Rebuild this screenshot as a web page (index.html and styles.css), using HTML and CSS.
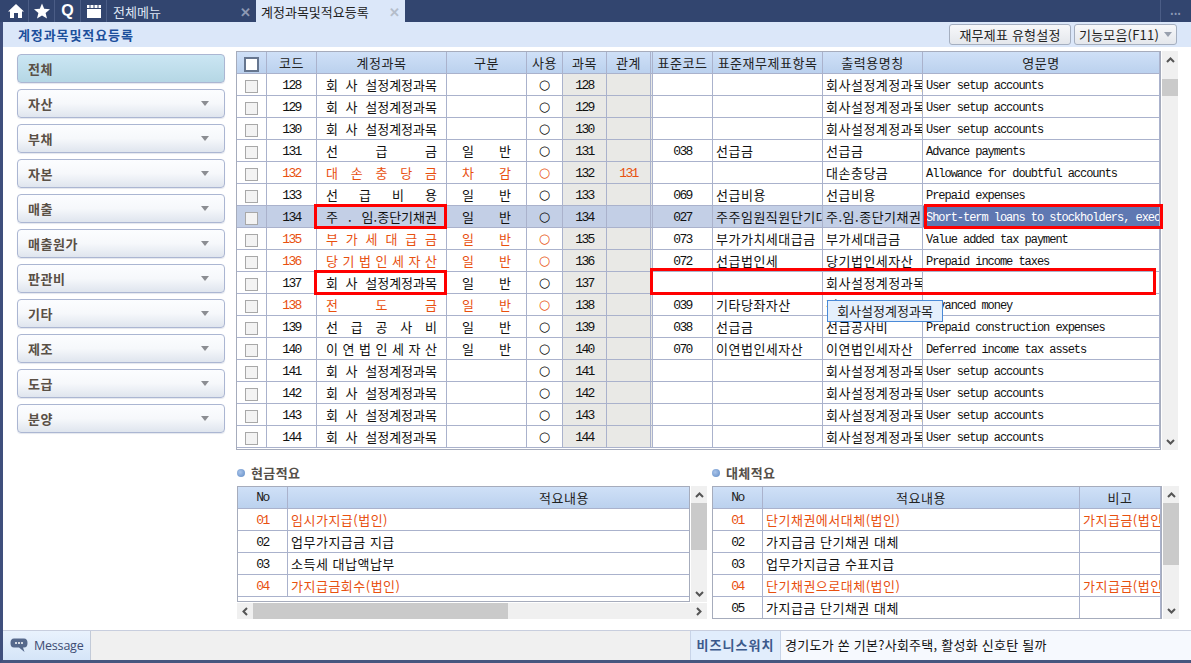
FILE: index.html
```html
<!DOCTYPE html>
<html lang="ko">
<head>
    <meta charset="UTF-8">
    <title>계정과목및적요등록</title>
    <link rel="stylesheet" href="styles.css">
</head>
<body>
<div class="window">
    <div class="tabbar">
        <div class="tab-icon"><svg width="18" height="16" viewBox="0 0 18 16"><path d="M9 1 L17 8.5 L15 8.5 L15 15 L11 15 L11 10 L7 10 L7 15 L3 15 L3 8.5 L1 8.5 Z" fill="#fff"/></svg></div>
        <div class="tab-icon"><svg width="18" height="16" viewBox="0 0 18 16"><path d="M9 0.5 L11.2 5.8 L17 6.2 L12.6 9.9 L14 15.5 L9 12.5 L4 15.5 L5.4 9.9 L1 6.2 L6.8 5.8 Z" fill="#fff"/></svg></div>
        <div class="tab-icon tab-q">Q</div>
        <div class="tab-icon"><svg width="16" height="15" viewBox="0 0 16 15"><path d="M1 1 H15 V4 H1 Z M1 5 H15 V14 H1 Z" fill="#fff"/><path d="M4 1 V4 M8 1 V4 M12 1 V4" stroke="#32456f" stroke-width="1"/></svg></div>
        <div class="tab">전체메뉴<span class="tab-x">✕</span></div>
        <div class="tab tab-active">계정과목및적요등록<span class="tab-x">✕</span></div>
        <div class="tab-more">•••</div>
    </div>

    <div class="titlebar">
        <h1 class="page-title">계정과목및적요등록</h1>
        <button class="tool-btn btn-type">재무제표 유형설정</button>
        <button class="tool-btn btn-func">기능모음(F11)<span class="arrow"></span></button>
    </div>

    <div class="main">
        <div class="sidebar">
            <div class="side-btn side-active">전체</div>
            <div class="side-btn">자산<span class="side-arrow"></span></div>
            <div class="side-btn">부채<span class="side-arrow"></span></div>
            <div class="side-btn">자본<span class="side-arrow"></span></div>
            <div class="side-btn">매출<span class="side-arrow"></span></div>
            <div class="side-btn">매출원가<span class="side-arrow"></span></div>
            <div class="side-btn">판관비<span class="side-arrow"></span></div>
            <div class="side-btn">기타<span class="side-arrow"></span></div>
            <div class="side-btn">제조<span class="side-arrow"></span></div>
            <div class="side-btn">도급<span class="side-arrow"></span></div>
            <div class="side-btn">분양<span class="side-arrow"></span></div>
        </div>

        <div class="content">
            <div class="grid-area">
                <div class="grid-box">
                    <table class="grid main-grid">
                        <colgroup>
                            <col style="width:30px"><col style="width:50px"><col style="width:130px"><col style="width:80px"><col style="width:36px"><col style="width:44px"><col style="width:46px"><col style="width:60px"><col style="width:110px"><col style="width:100px"><col style="width:237px">
                        </colgroup>
                        <thead>
                            <tr><th><span class="check check-all"></span></th><th>코드</th><th>계정과목</th><th>구분</th><th>사용</th><th>과목</th><th>관계</th><th>표준코드</th><th>표준재무제표항목</th><th>출력용명칭</th><th>영문명</th></tr>
                        </thead>
                        <tbody>
                            <tr><td><span class="check"></span></td><td>128</td><td>회 사 설정계정과목</td><td></td><td>○</td><td>128</td><td></td><td></td><td></td><td>회사설정계정과목</td><td>User setup accounts</td></tr>
                            <tr><td><span class="check"></span></td><td>129</td><td>회 사 설정계정과목</td><td></td><td>○</td><td>129</td><td></td><td></td><td></td><td>회사설정계정과목</td><td>User setup accounts</td></tr>
                            <tr><td><span class="check"></span></td><td>130</td><td>회 사 설정계정과목</td><td></td><td>○</td><td>130</td><td></td><td></td><td></td><td>회사설정계정과목</td><td>User setup accounts</td></tr>
                            <tr><td><span class="check"></span></td><td>131</td><td>선 급 금</td><td>일 반</td><td>○</td><td>131</td><td></td><td>038</td><td>선급금</td><td>선급금</td><td>Advance payments</td></tr>
                            <tr class="red"><td><span class="check"></span></td><td>132</td><td>대 손 충 당 금</td><td>차 감</td><td>○</td><td>132</td><td>131</td><td></td><td></td><td>대손충당금</td><td>Allowance for doubtful accounts</td></tr>
                            <tr><td><span class="check"></span></td><td>133</td><td>선 급 비 용</td><td>일 반</td><td>○</td><td>133</td><td></td><td>069</td><td>선급비용</td><td>선급비용</td><td>Prepaid expenses</td></tr>
                            <tr class="selected"><td><span class="check"></span></td><td>134</td><td>주 . 임.종단기채권</td><td>일 반</td><td>○</td><td>134</td><td></td><td>027</td><td>주주임원직원단기대여금</td><td>주.임.종단기채권</td><td class="cell-on">Short-term loans to stockholders, executives</td></tr>
                            <tr class="red"><td><span class="check"></span></td><td>135</td><td>부 가 세 대 급 금</td><td>일 반</td><td>○</td><td>135</td><td></td><td>073</td><td>부가가치세대급금</td><td>부가세대급금</td><td>Value added tax payment</td></tr>
                            <tr class="red"><td><span class="check"></span></td><td>136</td><td>당 기 법 인 세 자 산</td><td>일 반</td><td>○</td><td>136</td><td></td><td>072</td><td>선급법인세</td><td>당기법인세자산</td><td>Prepaid income taxes</td></tr>
                            <tr><td><span class="check"></span></td><td>137</td><td>회 사 설정계정과목</td><td>일 반</td><td>○</td><td>137</td><td></td><td></td><td></td><td>회사설정계정과목</td><td></td></tr>
                            <tr class="red"><td><span class="check"></span></td><td>138</td><td>전 도 금</td><td>일 반</td><td>○</td><td>138</td><td></td><td>039</td><td>기타당좌자산</td><td>전도금</td><td>Advanced money</td></tr>
                            <tr><td><span class="check"></span></td><td>139</td><td>선 급 공 사 비</td><td>일 반</td><td>○</td><td>139</td><td></td><td>038</td><td>선급금</td><td>선급공사비</td><td>Prepaid construction expenses</td></tr>
                            <tr><td><span class="check"></span></td><td>140</td><td>이 연 법 인 세 자 산</td><td>일 반</td><td>○</td><td>140</td><td></td><td>070</td><td>이연법인세자산</td><td>이연법인세자산</td><td>Deferred income tax assets</td></tr>
                            <tr><td><span class="check"></span></td><td>141</td><td>회 사 설정계정과목</td><td></td><td>○</td><td>141</td><td></td><td></td><td></td><td>회사설정계정과목</td><td>User setup accounts</td></tr>
                            <tr><td><span class="check"></span></td><td>142</td><td>회 사 설정계정과목</td><td></td><td>○</td><td>142</td><td></td><td></td><td></td><td>회사설정계정과목</td><td>User setup accounts</td></tr>
                            <tr><td><span class="check"></span></td><td>143</td><td>회 사 설정계정과목</td><td></td><td>○</td><td>143</td><td></td><td></td><td></td><td>회사설정계정과목</td><td>User setup accounts</td></tr>
                            <tr><td><span class="check"></span></td><td>144</td><td>회 사 설정계정과목</td><td></td><td>○</td><td>144</td><td></td><td></td><td></td><td>회사설정계정과목</td><td>User setup accounts</td></tr>
                        </tbody>
                    </table>
                </div>
                <div class="vscroll vscroll-main">
                    <div class="sb-btn"><svg width="9" height="6" viewBox="0 0 9 6"><path d="M1 5 L4.5 1.5 L8 5" fill="none" stroke="#555" stroke-width="2"/></svg></div>
                    <div class="sb-track"><div class="sb-thumb thumb-main"></div></div>
                    <div class="sb-btn"><svg width="9" height="6" viewBox="0 0 9 6"><path d="M1 1 L4.5 4.5 L8 1" fill="none" stroke="#555" stroke-width="2"/></svg></div>
                </div>

                <div class="mark mark-name1"></div>
                <div class="mark mark-name2"></div>
                <div class="mark mark-eng"></div>
                <div class="mark mark-row"></div>
                <div class="tooltip">회사설정계정과목</div>
            </div>

            <div class="lower">
                <div class="panel panel-left">
                    <h2 class="panel-title"><span class="bullet"></span>현금적요</h2>
                    <div class="panel-body">
                        <div class="grid-box cash-box">
                            <table class="grid sub-grid cash-grid">
                                <colgroup><col style="width:50px"><col style="width:553px"></colgroup>
                                <thead><tr><th>No</th><th>적요내용</th></tr></thead>
                                <tbody>
                                    <tr class="red"><td>01</td><td>임시가지급(법인)</td></tr>
                                    <tr><td>02</td><td>업무가지급금 지급</td></tr>
                                    <tr><td>03</td><td>소득세 대납액납부</td></tr>
                                    <tr class="red"><td>04</td><td>가지급금회수(법인)</td></tr>
                                </tbody>
                            </table>
                        </div>
                        <div class="vscroll">
                            <div class="sb-btn"><svg width="9" height="6" viewBox="0 0 9 6"><path d="M1 5 L4.5 1.5 L8 5" fill="none" stroke="#555" stroke-width="2"/></svg></div>
                            <div class="sb-track"><div class="sb-thumb thumb-cash"></div></div>
                            <div class="sb-btn"><svg width="9" height="6" viewBox="0 0 9 6"><path d="M1 1 L4.5 4.5 L8 1" fill="none" stroke="#555" stroke-width="2"/></svg></div>
                        </div>
                    </div>
                    <div class="hscroll">
                        <div class="sb-btn"><svg width="6" height="9" viewBox="0 0 6 9"><path d="M5 1 L1.5 4.5 L5 8" fill="none" stroke="#555" stroke-width="2"/></svg></div>
                        <div class="sb-track"><div class="sb-thumb thumb-h"></div></div>
                        <div class="sb-btn"><svg width="6" height="9" viewBox="0 0 6 9"><path d="M1 1 L4.5 4.5 L1 8" fill="none" stroke="#555" stroke-width="2"/></svg></div>
                    </div>
                </div>

                <div class="panel panel-right">
                    <h2 class="panel-title"><span class="bullet"></span>대체적요</h2>
                    <div class="panel-body">
                        <div class="grid-box transfer-box">
                            <table class="grid sub-grid transfer-grid">
                                <colgroup><col style="width:50px"><col style="width:317px"><col style="width:81px"></colgroup>
                                <thead><tr><th>No</th><th>적요내용</th><th>비고</th></tr></thead>
                                <tbody>
                                    <tr class="red"><td>01</td><td>단기채권에서대체(법인)</td><td>가지급금(법인)</td></tr>
                                    <tr><td>02</td><td>가지급금 단기채권 대체</td><td></td></tr>
                                    <tr><td>03</td><td>업무가지급금 수표지급</td><td></td></tr>
                                    <tr class="red"><td>04</td><td>단기채권으로대체(법인)</td><td>가지급금(법인)</td></tr>
                                    <tr><td>05</td><td>가지급금 단기채권 대체</td><td></td></tr>
                                </tbody>
                            </table>
                        </div>
                        <div class="vscroll">
                            <div class="sb-btn"><svg width="9" height="6" viewBox="0 0 9 6"><path d="M1 5 L4.5 1.5 L8 5" fill="none" stroke="#555" stroke-width="2"/></svg></div>
                            <div class="sb-track"><div class="sb-thumb thumb-transfer"></div></div>
                            <div class="sb-btn"><svg width="9" height="6" viewBox="0 0 9 6"><path d="M1 1 L4.5 4.5 L8 1" fill="none" stroke="#555" stroke-width="2"/></svg></div>
                        </div>
                    </div>
                </div>
            </div>
        </div>
    </div>

    <div class="statusbar">
        <div class="msg-btn">
            <svg width="18" height="15" viewBox="0 0 18 15"><path d="M4 0.5 H14 Q17.5 0.5 17.5 5 Q17.5 9.5 14 9.5 H13 L14.5 14 L9 9.5 H4 Q0.5 9.5 0.5 5 Q0.5 0.5 4 0.5 Z" fill="#56698c"/><circle cx="6" cy="5" r="1" fill="#fff"/><circle cx="9" cy="5" r="1" fill="#fff"/><circle cx="12" cy="5" r="1" fill="#fff"/></svg>
            Message
        </div>
        <div class="status-space"></div>
        <div class="news-label">비즈니스워치</div>
        <div class="news-text">경기도가 쏜 기본?사회주택, 활성화 신호탄 될까</div>
    </div>
</div>
</body>
</html>
```

FILE: styles.css
```css
* {
    box-sizing: border-box;
}
html, body {
    margin: 0;
    padding: 0;
}
body {
    width: 1191px;
    height: 663px;
    overflow: hidden;
    font-family: "Noto Sans CJK KR", "Noto Sans", sans-serif;
    font-size: 13px;
    color: #111;
    background: #fff;
}
.window {
    display: flex;
    flex-direction: column;
    height: 663px;
    border-left: 3px solid #3f4f7c;
    border-bottom: 3px solid #46567f;
}

/* top tabs */
.tabbar {
    display: flex;
    height: 22px;
    margin-left: -3px;
    background: #32456f;
    color: #dfe6f3;
    flex-shrink: 0;
}
.tab-icon {
    display: flex;
    align-items: center;
    justify-content: center;
    width: 26px;
    border-right: 1px solid #4b5d86;
}
.tab-icon:first-child {
    width: 29px;
    padding-left: 3px;
}
.tab-q {
    color: #fff;
    font-family: "Liberation Sans", sans-serif;
    font-weight: bold;
    font-size: 16px;
}
.tab {
    display: flex;
    align-items: center;
    justify-content: space-between;
    width: 149px;
    padding: 0 5px 0 6px;
    font-size: 13px;
}
.tab-active {
    padding-left: 5px;
    padding-right: 3px;
    background: #dbe7f9;
    color: #222;
}
.tab-x {
    font-size: 13px;
    color: #8d99b4;
    font-weight: bold;
}
.tab-active .tab-x {
    color: #b4bdca;
    margin-right: 2px;
}
.tab-more {
    margin-left: auto;
    width: 31px;
    border-left: 1px solid #4b5d86;
    color: #8d9ab6;
    font-size: 8px;
    line-height: 26px;
    text-align: center;
    letter-spacing: 1px;
}

.titlebar {
    display: flex;
    align-items: center;
    height: 25px;
    padding: 0 14px 1px 15px;
    background: #dbe7f9;
    flex-shrink: 0;
}
.page-title {
    margin: 0 auto 0 0;
    font-size: 13px;
    font-weight: bold;
    color: #1c4f9c;
    letter-spacing: .9px;
}
.tool-btn {
    display: flex;
    align-items: center;
    height: 21px;
    padding: 0;
    justify-content: center;
    border: 1px solid #a5afc0;
    border-radius: 3px;
    background: linear-gradient(#f7f8fa, #e4e7ec);
    font-family: inherit;
    font-size: 13px;
    letter-spacing: .2px;
    color: #222;
}
.btn-type {
    width: 122px;
    margin-right: 3px;
}
.btn-func {
    width: 103px;
}
.arrow {
    margin-left: 5px;
    border-left: 4px solid transparent;
    border-right: 4px solid transparent;
    border-top: 5px solid #98a0ae;
}

.main {
    display: flex;
    flex: 1;
    min-height: 0;
}

/* left filter buttons */
.sidebar {
    display: flex;
    flex-direction: column;
    gap: 6px;
    width: 233px;
    padding: 7px 11px 0 14px;
    flex-shrink: 0;
}
.side-btn {
    display: flex;
    align-items: center;
    justify-content: space-between;
    height: 29px;
    padding: 0 15px 0 10px;
    border: 1px solid #abb6d2;
    border-radius: 4px;
    background: linear-gradient(#fcfdff 0%, #f6f8fb 50%, #dfe5ee 100%);
    box-shadow: 0 1px 1px #e4e7ee;
    font-weight: bold;
    color: #5a5046;
    letter-spacing: .5px;
}
.side-active {
    background: linear-gradient(#cbe6f3, #b5d7e5);
}
.side-arrow {
    border-left: 4px solid transparent;
    border-right: 4px solid transparent;
    border-top: 5px solid #8b8d92;
}

.content {
    flex: 1;
    padding-top: 4px;
}

/* tables */
.grid-area {
    position: relative;
    display: flex;
    height: 399px;
}
.grid-box {
    border: 1px solid #a6acbc;
    overflow: hidden;
    background: #fff;
}
.grid-area .grid-box {
    width: 925px;
}
.grid {
    border-collapse: separate;
    border-spacing: 0;
    table-layout: fixed;
}
.main-grid {
    width: 923px;
}
.grid th {
    height: 22px;
    padding: 0;
    font-weight: normal;
    text-align: center;
    letter-spacing: .5px;
    color: #222;
    background: linear-gradient(#cfe0f7, #bbd1ee);
    border-right: 1px solid #aab2cc;
    border-bottom: 1px solid #aab2cc;
    white-space: nowrap;
    overflow: hidden;
}
.grid td {
    height: 22px;
    padding: 0 3px;
    border-right: 1px solid #aab2cc;
    border-bottom: 1px solid #aab2cc;
    white-space: nowrap;
    overflow: hidden;
    letter-spacing: .5px;
    line-height: 21px;
}
.main-grid td:nth-child(1) {
    text-align: center;
    padding: 0;
}
.main-grid td:nth-child(5) {
    text-align: center;
    padding: 0;
    font-family: "DejaVu Sans", sans-serif;
    font-size: 13px;
    letter-spacing: 0;
    color: #000;
}
.main-grid td:nth-child(2), .main-grid td:nth-child(6), .main-grid td:nth-child(7), .main-grid td:nth-child(8),
.sub-grid td:first-child {
    padding-top: 2px;
    line-height: 19px;
    text-align: center;
    font-family: "Liberation Mono", monospace;
    font-size: 13px;
    letter-spacing: -1.6px;
}
.sub-grid th:first-child {
    font-family: "Liberation Mono", monospace;
    letter-spacing: -1.6px;
}
.main-grid td:nth-child(3), .main-grid td:nth-child(4) {
    white-space: normal;
    text-align: justify;
    text-align-last: justify;
    letter-spacing: 0;
}
.main-grid td:nth-child(3) {
    padding: 0 9px;
}
.main-grid td:nth-child(4) {
    padding: 0 15px;
}
.main-grid td:nth-child(6), .main-grid td:nth-child(7) {
    background: #e9e9e6;
}
.main-grid td:nth-child(7), .main-grid th:nth-child(7) {
    border-right: 3px double #aab2cc;
}
.main-grid td:nth-child(11) {
    padding-top: 3px;
    line-height: 18px;
    font-family: "Liberation Mono", monospace;
    font-size: 12px;
    letter-spacing: -1.04px;
}
.main-grid tr.red td:nth-child(2), .main-grid tr.red td:nth-child(3), .main-grid tr.red td:nth-child(4),
.main-grid tr.red td:nth-child(5), .main-grid tr.red td:nth-child(7),
.sub-grid tr.red td {
    color: #e8500f;
}
.main-grid tr.selected td {
    background: #c3cfe6;
}
.main-grid tr.selected td.cell-on {
    background: #5f78b2;
    color: #fff;
}
.check {
    display: inline-block;
    width: 13px;
    height: 13px;
    vertical-align: middle;
    border: 1px solid #a8a8a8;
    background: #f3f3f3;
}
.check-all {
    width: 15px;
    height: 15px;
    border: 2px solid #66768f;
    background: #fff;
}

/* overlays on the main grid */
.mark {
    position: absolute;
    border: 3px solid #f00;
}
.mark-name1 {
    left: 78px;
    top: 153px;
    width: 133px;
    height: 25px;
}
.mark-name2 {
    left: 78px;
    top: 219px;
    width: 133px;
    height: 25px;
}
.mark-eng {
    left: 688px;
    top: 153px;
    width: 239px;
    height: 25px;
}
.mark-row {
    left: 414px;
    top: 217px;
    width: 506px;
    height: 27px;
}
.tooltip {
    position: absolute;
    left: 591px;
    top: 249px;
    width: 116px;
    height: 22px;
    border: 1px solid #4a8ad8;
    background: #e4effc;
    text-align: center;
    line-height: 20px;
    color: #222;
}

/* scrollbars */
.vscroll {
    display: flex;
    flex-direction: column;
    width: 16px;
    background: #f0f0f0;
    flex-shrink: 0;
}
.vscroll-main {
    margin-left: 1px;
}
.hscroll {
    display: flex;
    height: 16px;
    margin-top: 1px;
    background: #f0f0f0;
}
.sb-btn {
    display: flex;
    align-items: center;
    justify-content: center;
    width: 16px;
    height: 17px;
    flex-shrink: 0;
}
.sb-track {
    flex: 1;
}
.sb-thumb {
    background: #cacaca;
}
.thumb-main {
    margin-top: 11px;
    height: 17px;
}
.thumb-cash {
    height: 47px;
}
.thumb-transfer {
    height: 62px;
}
.thumb-h {
    width: 255px;
    height: 100%;
}

/* lower tables */
.lower {
    display: flex;
    gap: 5px;
    margin-top: 14px;
}
.panel-left {
    width: 471px;
    padding-left: 1px;
}
.panel-right {
    width: 467px;
}
.panel-title {
    display: flex;
    align-items: center;
    height: 22px;
    margin: 0;
    padding-bottom: 5px;
    font-size: 13px;
    font-weight: bold;
    color: #555049;
    letter-spacing: .4px;
}
.bullet {
    width: 8px;
    height: 8px;
    margin-right: 6px;
    border-radius: 50%;
    background: radial-gradient(circle at 40% 40%, #a9c4ea, #5f8ac4);
}
.panel-body {
    display: flex;
}
.cash-box {
    width: 453px;
    height: 116px;
    margin-right: 1px;
}
.cash-grid {
    width: 603px;
}
.transfer-box {
    width: 450px;
    height: 133px;
    margin-right: 1px;
}
.transfer-grid {
    width: 448px;
}
.transfer-grid td:last-child {
    padding-right: 0;
}

/* bottom bar */
.statusbar {
    display: flex;
    height: 30px;
    border-top: 1px solid #c8cede;
    background: #f0f0f0;
    flex-shrink: 0;
}
.msg-btn {
    display: flex;
    align-items: center;
    gap: 6px;
    width: 88px;
    padding-left: 7px;
    background: linear-gradient(#e9f2fd, #d5e5f8);
    border-right: 1px solid #c2cad8;
    font-family: "Open Sans", sans-serif;
    font-size: 12.5px;
    letter-spacing: -.2px;
    color: #3e4c73;
}
.status-space {
    width: 599px;
}
.news-label {
    width: 91px;
    background: #e1edfc;
    border-left: 1px solid #c8d4e8;
    border-right: 1px solid #c8d4e8;
    text-align: center;
    line-height: 28px;
    font-weight: bold;
    letter-spacing: 1px;
    color: #3c5a8c;
}
.news-text {
    flex: 1;
    padding-left: 4px;
    background: #f6f9fe;
    line-height: 28px;
    letter-spacing: .25px;
}
```
